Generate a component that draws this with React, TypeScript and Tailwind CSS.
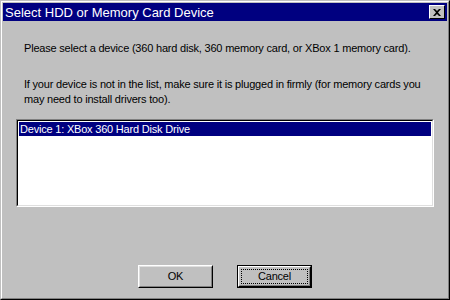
export default function App() {
  return (
    <div className="w-[450px] h-[300px] bg-[#c0c0c0] border border-t-[#c0c0c0] border-l-[#c0c0c0] border-r-black border-b-black font-['Liberation_Sans',Arial,sans-serif] text-[11px] text-black">
      <div className="w-full h-full border border-t-white border-l-white border-r-[#808080] border-b-[#808080] p-[1px] flex flex-col">
        {/* title bar */}
        <div className="h-[18px] bg-[#000080] flex items-center justify-between pl-[2px] pr-[2px]">
          <span className="text-white text-[13px] leading-none">Select HDD or Memory Card Device</span>
          <div className="w-[16px] h-[14px] bg-[#c0c0c0] border border-t-white border-l-white border-r-black border-b-black flex items-center justify-center">
            <svg width="8" height="7" viewBox="0 0 8 7">
              <path d="M0 0h2l2 2 2-2h2L5 3.5 8 7H6L4 5 2 7H0l3-3.5z" fill="black" />
            </svg>
          </div>
        </div>

        <div className="flex-1 flex flex-col px-[13px] tracking-[-0.2px]">
          <p className="mt-[21px] pl-[8px] leading-[13px]">
            Please select a device (360 hard disk, 360 memory card, or XBox 1 memory card).
          </p>
          <p className="mt-[22px] pl-[8px] pr-[2px] leading-[15px]">
            If your device is not in the list, make sure it is plugged in firmly (for memory cards you may need to install drivers too).
          </p>

          <div className="mt-[12px] h-[88px] border border-t-[#808080] border-l-[#808080] border-r-white border-b-white">
            <div className="h-full bg-white border border-t-black border-l-black border-r-[#dfdfdf] border-b-[#dfdfdf] p-[1px]">
              <div className="h-[14px] bg-[#000080] text-white leading-[14px] pl-[1px]">
                Device 1: XBox 360 Hard Disk Drive
              </div>
            </div>
          </div>

          <div className="flex justify-center gap-[24px] mt-[58px]">
            <button className="w-[75px] h-[23px] border border-t-white border-l-white border-r-black border-b-black">
              <div className="w-full h-full border border-t-[#dfdfdf] border-l-[#dfdfdf] border-r-[#808080] border-b-[#808080] flex items-center justify-center">
                OK
              </div>
            </button>
            <button className="w-[75px] h-[23px] border border-black">
              <div className="w-full h-full border border-t-white border-l-white border-r-black border-b-black">
                <div className="w-full h-full border border-t-[#c0c0c0] border-l-[#c0c0c0] border-r-[#808080] border-b-[#808080] p-[1px]">
                  <div className="w-full h-full border border-dotted border-black flex items-center justify-center">
                    Cancel
                  </div>
                </div>
              </div>
            </button>
          </div>
        </div>
      </div>
    </div>
  );
}
